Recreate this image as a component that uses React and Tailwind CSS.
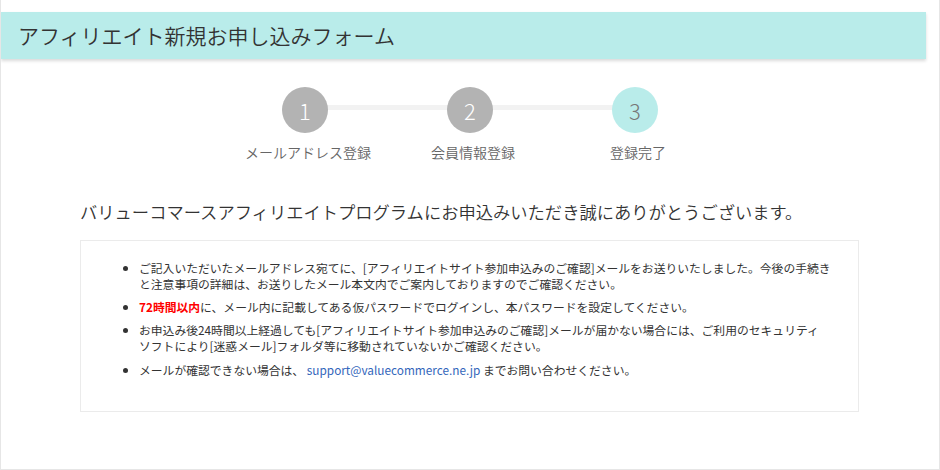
import React from 'react'

const steps = [
  { num: 1, label: 'メールアドレス登録', done: true },
  { num: 2, label: '会員情報登録', done: true },
  { num: 3, label: '登録完了', done: false },
]

function Stepper() {
  return (
    <div className="relative mx-auto mt-[28px] flex w-[495px]">
      {/* connector line behind circles */}
      <div className="absolute left-[82px] right-[82px] top-[18px] h-[5px] bg-[#f2f2f2]" />
      {steps.map((s) => (
        <div key={s.num} className="relative flex w-[165px] flex-col items-center">
          <div
            className={
              s.done
                ? 'flex h-[46px] w-[46px] items-center justify-center rounded-full bg-[#b3b3b3] text-[22px] font-light text-white'
                : 'flex h-[46px] w-[46px] items-center justify-center rounded-full bg-[#b9ecea] text-[22px] font-light text-[#777]'
            }
          >
            {s.num}
          </div>
          <p className="mt-[9px] pl-[6px] text-[14px] font-[350] leading-[20px] text-[#666]">{s.label}</p>
        </div>
      ))}
    </div>
  )
}

export default function App() {
  return (
    <div className="h-[470px] w-[940px] overflow-hidden border-x border-b border-[#e6e6e6] bg-white font-['Noto_Sans_CJK_JP','Noto_Sans',sans-serif] text-[#333]">
      {/* Header */}
      <div className="pr-[13px] pt-3">
        <div className="flex h-[47px] items-center bg-[#b9ecea] pl-[17px] shadow-[0_2px_3px_rgba(0,0,0,0.15)]">
          <h1 className="text-[21px] font-[350] text-[#333]">アフィリエイト新規お申し込みフォーム</h1>
        </div>
      </div>

      <Stepper />

      <div className="pl-[79px] pr-[80px]">
        <h2 className="mt-[37px] text-[17.3px] font-[350] leading-[26px] text-[#333]">
          バリューコマースアフィリエイトプログラムにお申込みいただき誠にありがとうございます。
        </h2>

        <div className="mt-[15px] h-[172px] border border-[#ebebeb] pt-[19px]">
          <ul className="list-disc space-y-[7px] pl-[58px] text-[11.8px] leading-[16px] text-[#333]">
            <li>
              ご記入いただいたメールアドレス宛てに、[アフィリエイトサイト参加申込みのご確認]メールをお送りいたしました。今後の手続き
              <br />
              と注意事項の詳細は、お送りしたメール本文内でご案内しておりますのでご確認ください。
            </li>
            <li>
              <span className="font-bold text-[#ff0000]">72時間以内</span>
              に、メール内に記載してある仮パスワードでログインし、本パスワードを設定してください。
            </li>
            <li>
              お申込み後24時間以上経過しても[アフィリエイトサイト参加申込みのご確認]メールが届かない場合には、ご利用のセキュリティ
              <br />
              ソフトにより[迷惑メール]フォルダ等に移動されていないかご確認ください。
            </li>
            <li className="pt-[1px]">
              メールが確認できない場合は、{' '}
              <a href="#" className="text-[#3366bb]">support@valuecommerce.ne.jp</a> までお問い合わせください。
            </li>
          </ul>
        </div>
      </div>
    </div>
  )
}
